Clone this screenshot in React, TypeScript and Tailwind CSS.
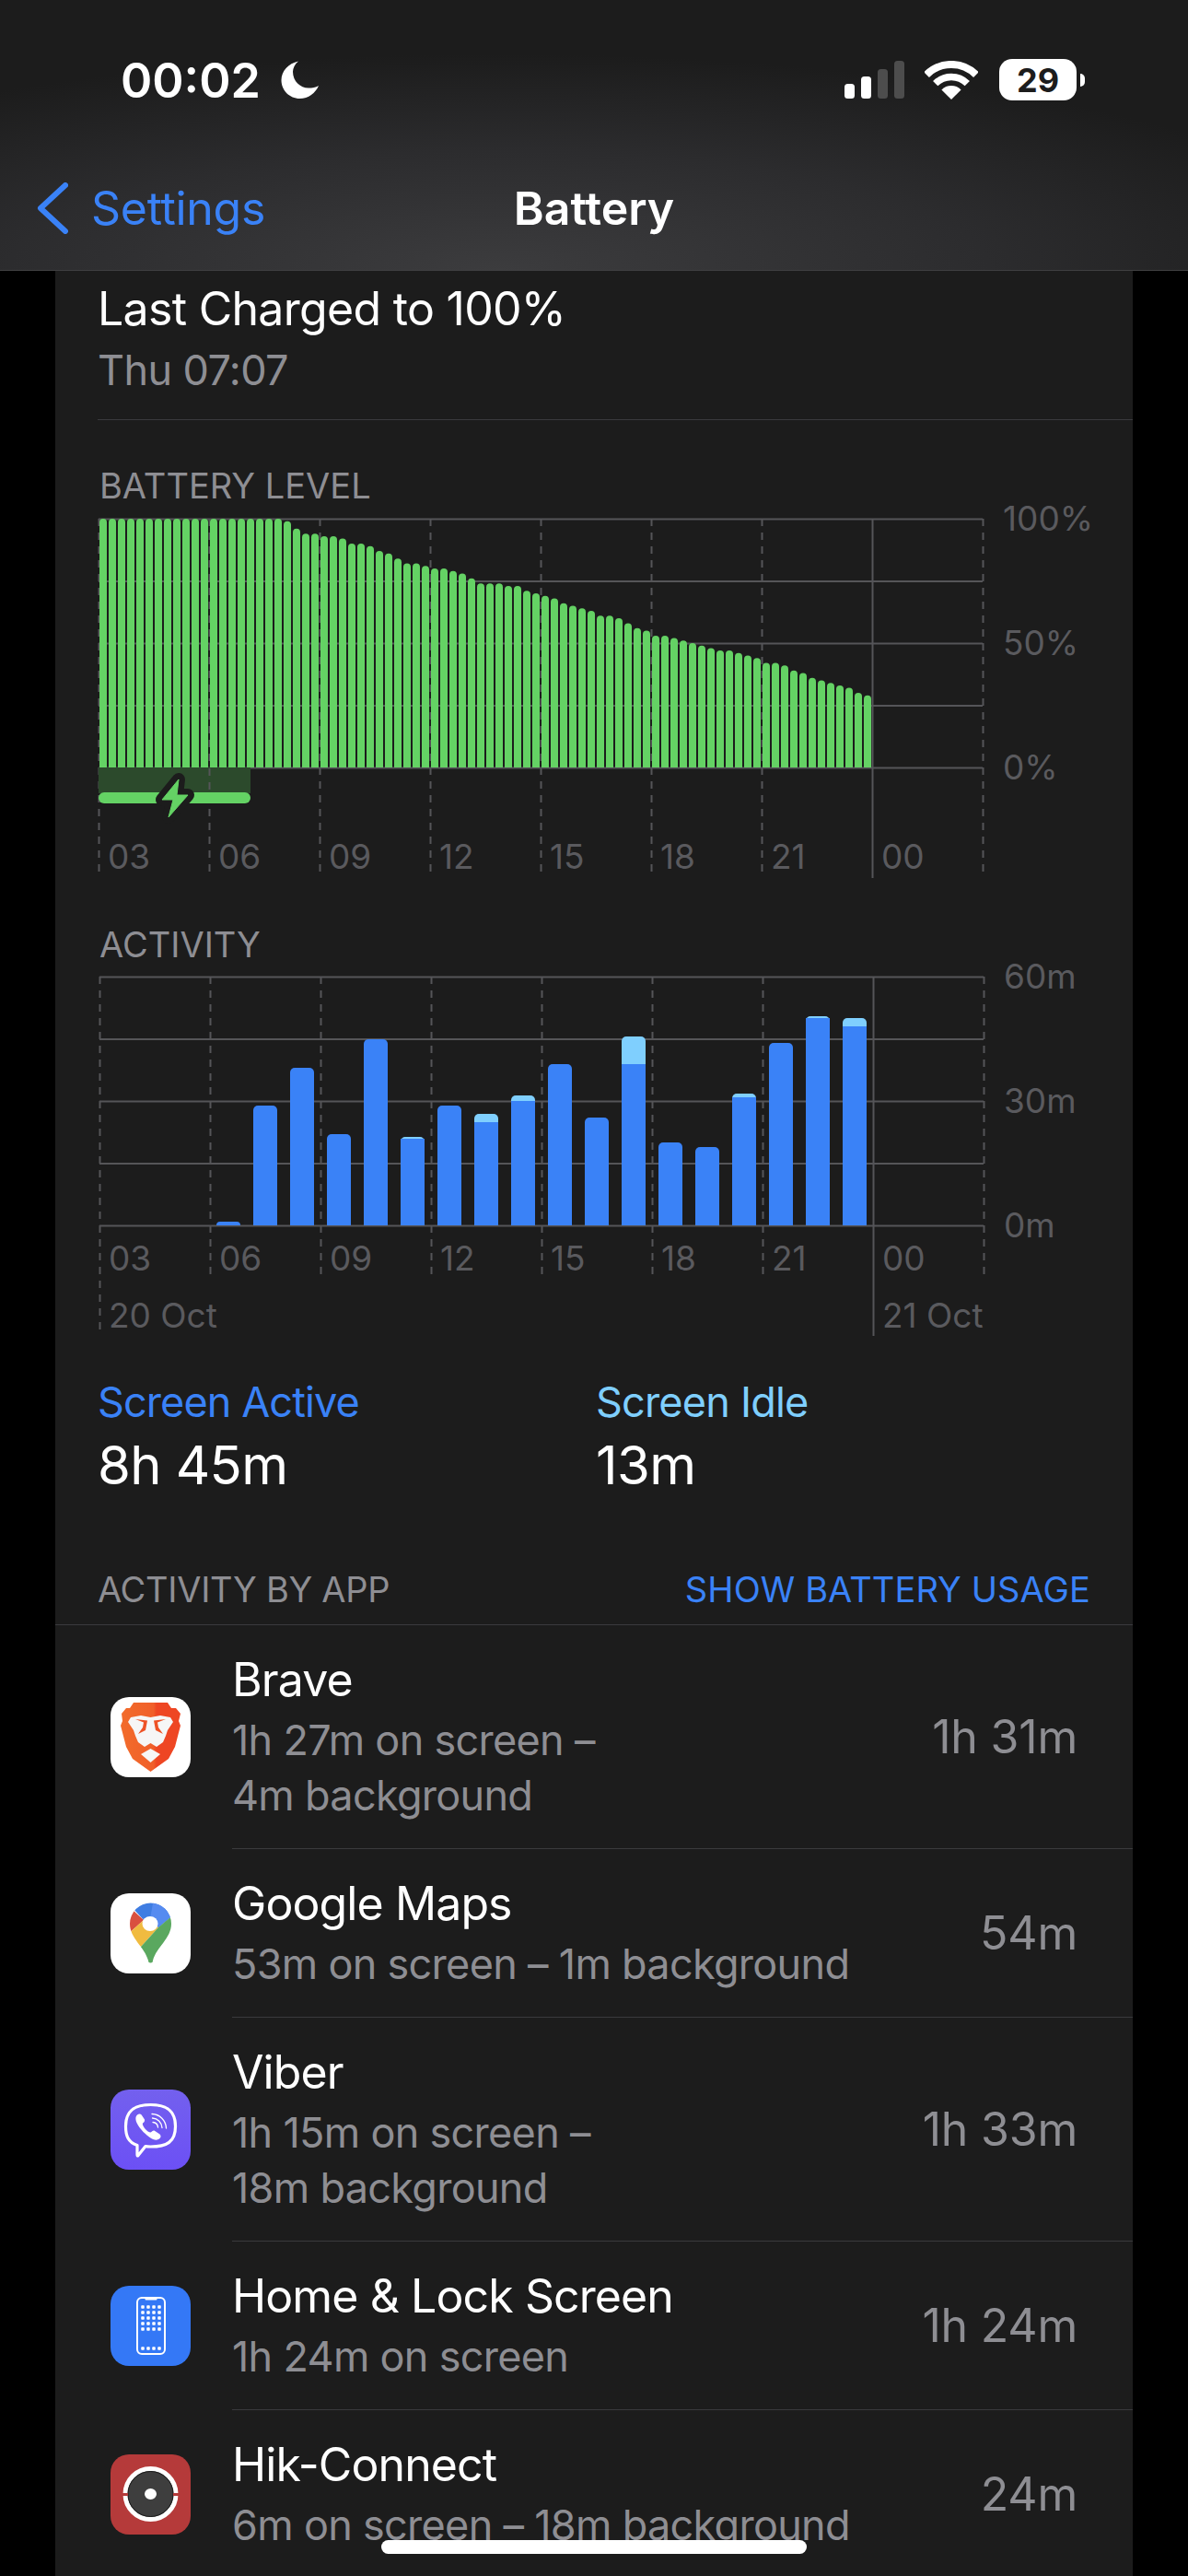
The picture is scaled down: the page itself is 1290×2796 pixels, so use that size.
import React from "react";

const levels = [
  100, 100, 100, 100, 100, 100, 100, 100, 100, 100, 100, 100, 100, 100, 100, 100, 100, 100, 100, 100,
  99, 96, 94, 94, 93, 93, 92, 90, 90, 89, 87, 86, 84, 82, 82, 81, 80, 80, 79, 78, 76,
  74, 74, 74, 73, 73, 71, 70, 69, 68, 66, 65, 64, 63, 61, 61, 60, 58, 56, 55, 53, 53, 52, 51, 50,
  49, 48, 47, 47, 46, 45, 44, 42, 42, 41, 39, 38, 36, 35, 34, 33, 32, 30, 29,
];

// slot index, screen active height, screen idle height (px)
const activity: [number, number, number][] = [
  [3, 4, 0],
  [4, 130, 0],
  [5, 171, 0],
  [6, 99, 0],
  [7, 202, 0],
  [8, 94, 2],
  [9, 130, 0],
  [10, 112, 9],
  [11, 135, 6],
  [12, 175, 0],
  [13, 117, 0],
  [14, 175, 30],
  [15, 90, 0],
  [16, 85, 0],
  [17, 139, 4],
  [18, 198, 0],
  [19, 225, 2],
  [20, 216, 9],
];

const hours = ["03", "06", "09", "12", "15", "18", "21", "00"];
const gridColor = "#555558";

function Grid({ dashEnds, solidEnd }: { dashEnds: number[]; solidEnd: number }) {
  return (
    <>
      {[0, 67.5, 135, 202.5, 270].map((y) => (
        <line key={y} x1={0} x2={960} y1={y + 0.5} y2={y + 0.5} stroke={gridColor} strokeWidth={2} />
      ))}
      {[0, 120, 240, 360, 480, 600, 720, 960].map((x, i) => (
        <line
          key={x}
          x1={x + 0.5}
          x2={x + 0.5}
          y1={0}
          y2={dashEnds[i]}
          stroke={gridColor}
          strokeWidth={2}
          strokeDasharray="8 7"
        />
      ))}
      <line x1={840.5} x2={840.5} y1={0} y2={solidEnd} stroke={gridColor} strokeWidth={2} />
    </>
  );
}

function AxisRow({ labels }: { labels: string[] }) {
  return (
    <div className="grid w-[960px] grid-cols-8">
      {labels.map((l, i) => (
        <span key={i} className="whitespace-nowrap pl-[10px] text-[37px] leading-[40px] text-[#5a5a5e]">
          {l}
        </span>
      ))}
    </div>
  );
}

function YAxis({ labels }: { labels: string[] }) {
  return (
    <div className="ml-[22px] flex h-[270px] flex-col justify-between">
      {labels.map((l) => (
        <div key={l} className="flex h-0 items-center text-[37px] text-[#5a5a5e]">
          {l}
        </div>
      ))}
    </div>
  );
}

function SectionLabel({ children }: { children: React.ReactNode }) {
  return <div className="text-[38px] leading-[46px] text-[#8e8e93]">{children}</div>;
}

function BatteryChart() {
  return (
    <div className="relative ml-[48px] mt-[13px] h-[387px]">
      <svg className="absolute left-0 top-0 overflow-visible" width={961} height={390}>
        <Grid dashEnds={[384, 384, 384, 384, 384, 384, 384, 384]} solidEnd={390} />
        <rect x={0} y={270} width={165} height={28} fill="#2c4a2c" />
        <line x1={120.5} x2={120.5} y1={271} y2={297} stroke={gridColor} strokeWidth={2} strokeDasharray="8 7" />
        <rect x={0} y={297} width={165} height={12} rx={6} fill="#64d264" />
        {levels.map((lv, i) => {
          const x = 1 + i * 10;
          const top = 270 - lv * 2.7;
          return <path key={i} d={`M${x} 270V${top + 4}a4 4 0 0 1 8 0V270Z`} fill="#64d264" />;
        })}
        <polygon
          points="87,283 69,305 81,305 76,324 97,300 85,300"
          fill="#64d264"
          stroke="#1c1c1c"
          strokeWidth={14}
          strokeLinejoin="round"
        />
        <polygon
          points="87,283 69,305 81,305 76,324 97,300 85,300"
          fill="#64d264"
          stroke="#64d264"
          strokeWidth={1}
          strokeLinejoin="round"
        />
      </svg>
      <div className="relative flex">
        <div className="h-[270px] w-[960px]" />
        <YAxis labels={["100%", "50%", "0%"]} />
      </div>
      <div className="relative mt-[77px]">
        <AxisRow labels={hours} />
      </div>
    </div>
  );
}

function ActivityChart() {
  return (
    <div className="relative ml-[48px] mt-[12px] h-[388px]">
      <svg className="absolute left-0 top-0 overflow-visible" width={961} height={390}>
        <Grid dashEnds={[384, 323, 323, 323, 323, 323, 323, 323]} solidEnd={390} />
        {activity.map(([slot, active, idle]) => {
          const x = slot * 40 + 7;
          const total = active + idle;
          const r = Math.min(5, total);
          const shape = `M${x} 270V${270 - total + r}a${r} ${r} 0 0 1 ${r} -${r}H${x + 26 - r}a${r} ${r} 0 0 1 ${r} ${r}V270Z`;
          return (
            <g key={slot}>
              <path d={shape} fill={idle > 0 ? "#7fcffe" : "#3a82f7"} />
              {idle > 0 && <rect x={x} y={270 - active} width={26} height={active} fill="#3a82f7" />}
            </g>
          );
        })}
      </svg>
      <div className="relative flex">
        <div className="h-[270px] w-[960px]" />
        <YAxis labels={["60m", "30m", "0m"]} />
      </div>
      <div className="relative mt-[16px]">
        <AxisRow labels={hours} />
      </div>
      <div className="relative mt-[22px]">
        <AxisRow labels={["20 Oct", "", "", "", "", "", "", "21 Oct"]} />
      </div>
    </div>
  );
}

function BraveIcon() {
  return (
    <svg viewBox="0 0 87 87" className="h-[87px] w-[87px]">
      <defs>
        <linearGradient id="brave" x1="0" x2="1" y1="0" y2="0">
          <stop offset="0" stopColor="#f26c2b" />
          <stop offset="0.55" stopColor="#f05f2a" />
          <stop offset="0.6" stopColor="#ee4623" />
          <stop offset="1" stopColor="#ee4623" />
        </linearGradient>
      </defs>
      <rect width="87" height="87" rx="20" fill="#fff" />
      <path
        d="M25 6H62L66 12L71 12L76 18L74 26L76 31L70 54L63 67L43.500 81L24 67L17 54L11 31L13 26L12 18L17 12L21 12Z"
        fill="url(#brave)"
      />
      <path
        d="M22 22L33 20L43.500 22L54 20L65 22L68 27L62 36L60 42L57 49L50 54L43.500 50L37 54L30 49L27 42L25 36L19 27Z"
        fill="#f6f6f6"
      />
      <path d="M43.500 56L54 62L43.500 71L33 62Z" fill="#f6f6f6" />
      <path d="M27 24L40 25.500L38 36L30 40L35 33L36 27.500ZM60 24L47 25.500L49 36L57 40L52 33L51 27.500Z" fill="#ee5226" />
    </svg>
  );
}

function MapsIcon() {
  return (
    <svg viewBox="0 0 87 87" className="h-[87px] w-[87px]">
      <defs>
        <clipPath id="pin">
          <path d="M43.500 10.500a22.500 22.500 0 0 1 22.500 22.500C66 49 50 58 46 73a2.500 2.500 0 0 1-5 0C37 58 21 49 21 33a22.500 22.500 0 0 1 22.500-22.500Z" />
        </clipPath>
      </defs>
      <rect width="87" height="87" rx="20" fill="#fff" />
      <g clipPath="url(#pin)">
        <polygon points="20,5 70,5 70,22 52,37 36,29 24,16" fill="#3f7de2" />
        <polygon points="47,5 70,5 70,22 52,37 43,28" fill="#568bf0" />
        <polygon points="10,5 36,29 15,48" fill="#d9503f" />
        <polygon points="36,29 52,37 33,58 15,48" fill="#f0bb40" />
        <polygon points="52,37 70,22 70,80 20,80 33,58" fill="#5aa85f" />
      </g>
      <ellipse cx="43" cy="33" rx="8.500" ry="8" fill="#fff" />
    </svg>
  );
}

function ViberIcon() {
  return (
    <svg viewBox="0 0 87 87" className="h-[87px] w-[87px]">
      <defs>
        <linearGradient id="viber" x1="0" x2="0" y1="0" y2="1">
          <stop offset="0" stopColor="#7360ee" />
          <stop offset="1" stopColor="#6c50f5" />
        </linearGradient>
      </defs>
      <rect width="87" height="87" rx="20" fill="url(#viber)" />
      <path
        d="M43.500 16.500C61 16.500 70.500 23 70.500 40C70.500 57 61 62 43.500 62C41 62 39.500 62 38 61.500L30 71.500Q29 72.500 29 70.500V60.500C19 57 16.500 50 16.500 40C16.500 23 26 16.500 43.500 16.500Z"
        fill="none"
        stroke="#fff"
        strokeWidth="3.200"
        strokeLinejoin="round"
      />
      <path
        d="M29 27.500C31 26 33 26.500 34 28L37 32.500C37.500 34 36.500 35.500 35 36.500C34.500 37.500 35 39 37 42C39.500 45 42 46.500 43.500 46.500C45 45.500 46 44 47.500 44.500L53.500 48.500C55 50 55 52 53 53.500C50.500 55.500 47 55 42 51.500C36 47 30.500 41 28 35C27 32 27 29 29 27.500Z"
        fill="#fff"
      />
      <path
        d="M45 26.500a16 16 0 0 1 15.500 15.500M45.500 31a11 11 0 0 1 10.500 10.500M46 35.500a6 6 0 0 1 5.500 5.500"
        fill="none"
        stroke="#fff"
        strokeWidth="1.300"
        strokeLinecap="round"
      />
    </svg>
  );
}

function HomeIcon() {
  const cols = [35, 41, 47, 53];
  return (
    <svg viewBox="0 0 87 87" className="h-[87px] w-[87px]">
      <rect width="87" height="87" rx="20" fill="#3478f6" />
      <rect x="29" y="13" width="30" height="61" rx="5" fill="none" stroke="#fff" strokeWidth="2" />
      <rect x="37.500" y="13" width="13" height="2.500" rx="1" fill="#fff" />
      {[23, 29, 35, 41, 47, 68].map((y) =>
        cols.map((x) => <rect key={`${x}-${y}`} x={x - 1.75} y={y - 1.75} width="3.500" height="3.500" rx="0.800" fill="#fff" />),
      )}
    </svg>
  );
}

function HikIcon() {
  return (
    <svg viewBox="0 0 87 87" className="h-[87px] w-[87px]">
      <rect width="87" height="87" rx="20" fill="#b53a3a" />
      <circle cx="43.500" cy="43" r="27.500" fill="#3e3e3e" stroke="#fff" strokeWidth="5" />
      <circle cx="43.500" cy="43" r="24.500" fill="none" stroke="#1c1c1c" strokeWidth="1" />
      <rect x="12" y="42" width="7" height="3" fill="#b53a3a" />
      <rect x="68" y="42" width="7" height="3" fill="#b53a3a" />
      <ellipse cx="43.500" cy="43" rx="6.500" ry="6" fill="#fff" />
    </svg>
  );
}

const apps = [
  { name: "Brave", lines: ["1h 27m on screen –", "4m background"], total: "1h 31m", icon: <BraveIcon /> },
  { name: "Google Maps", lines: ["53m on screen – 1m background"], total: "54m", icon: <MapsIcon /> },
  { name: "Viber", lines: ["1h 15m on screen –", "18m background"], total: "1h 33m", icon: <ViberIcon /> },
  { name: "Home & Lock Screen", lines: ["1h 24m on screen"], total: "1h 24m", icon: <HomeIcon /> },
  { name: "Hik-Connect", lines: ["6m on screen – 18m background"], total: "24m", icon: <HikIcon /> },
];

function AppRow({ app }: { app: (typeof apps)[number] }) {
  const tall = app.lines.length > 1;
  return (
    <div className={`flex ${tall ? "h-[243px]" : "h-[183px]"}`}>
      <div className="flex w-[192px] shrink-0 items-center pl-[60px]">{app.icon}</div>
      <div className="flex flex-1 items-center justify-between border-b border-[#3a3a3d] pr-[60px]">
        <div className="self-start pt-[29px]">
          <div className="text-[50px] leading-[60px] tracking-[-0.9px] text-white">{app.name}</div>
          <div className="mt-[6px] text-[45px] leading-[60px] tracking-[-0.7px] text-[#8e8e93]">
            {app.lines.map((l) => (
              <div key={l}>{l}</div>
            ))}
          </div>
        </div>
        <div className="text-[50px] tracking-[-0.2px] text-[#8e8e93]">{app.total}</div>
      </div>
    </div>
  );
}

function StatusBar() {
  return (
    <div className="flex h-[64px] items-start justify-between pl-[131px] pr-[112px] pt-0">
      <div className="flex h-[45px] items-center">
        <span className="mt-[2px] text-[52px] font-semibold leading-none text-white">00:02</span>
        <svg width="41" height="41" viewBox="0 0 41 41" className="ml-[22px]">
          <path
            d="M19 0.500C8 3 0.500 11 0.500 21C0.500 32 9.500 41 20.500 41C30 41 37.500 35 41 27C38 29 34 29.500 30 29.500C21 29.500 13 22 13 12C13 8 15 3.500 19 0.500Z"
            fill="#fff"
          />
        </svg>
      </div>
      <div className="flex h-[45px] items-center">
        <svg width="65" height="41" viewBox="0 0 65 41">
          <rect x="0" y="25" width="11" height="16" rx="3.500" fill="#fff" />
          <rect x="18" y="17" width="11" height="24" rx="3.500" fill="#fff" />
          <rect x="36" y="9" width="11" height="32" rx="3.500" fill="#4d4d4d" />
          <rect x="54" y="0" width="11" height="41" rx="3.500" fill="#4d4d4d" />
        </svg>
        <svg width="58" height="42" viewBox="0 0 58 42" className="ml-[22px]">
          <path d="M2.100 15.100A38 38 0 0 1 55.900 15.100" fill="none" stroke="#fff" strokeWidth="8" />
          <path d="M11.700 24.700A24.500 24.500 0 0 1 46.300 24.700" fill="none" stroke="#fff" strokeWidth="7.500" />
          <path d="M29 42L18.400 31.400A15 15 0 0 1 39.600 31.400Z" fill="#fff" />
        </svg>
        <div className="ml-[23px] flex h-[45px] w-[84px] items-center justify-center rounded-[14px] bg-white text-[36px] font-bold leading-none text-[#1c1c1c]">
          29
        </div>
        <div className="ml-[4px] h-[14px] w-[5px] rounded-r-[5px] bg-white" />
      </div>
    </div>
  );
}

export default function App() {
  return (
    <div className="relative h-[2796px] w-[1290px] overflow-hidden bg-black font-['Inter',sans-serif]">
      <header className="h-[294px] border-b border-[#3f3f41] bg-[radial-gradient(ellipse_75%_80%_at_42%_100%,#3c3c3e_0%,#2c2c2e_55%,#1c1c1c_100%)] pt-[64px]">
        <StatusBar />
        <nav className="mt-[38px] grid h-[120px] grid-cols-3 items-center">
          <div className="flex items-center pl-[40px]">
            <svg width="34" height="56" viewBox="0 0 34 56">
              <path d="M31 3L4 28L31 53" fill="none" stroke="#3a82f7" strokeWidth="6" strokeLinecap="round" strokeLinejoin="round" />
            </svg>
            <span className="ml-[25px] text-[50px] tracking-[-0.3px] text-[#3a82f7]">Settings</span>
          </div>
          <div className="text-center text-[50px] font-semibold text-white">Battery</div>
        </nav>
      </header>

      <main className="mx-[60px] flex flex-col bg-[#1c1c1c]">
        <section className="ml-[46px] border-b border-[#3a3a3d] pb-[26px] pt-[11px]">
          <div className="text-[50px] leading-[60px] tracking-[-0.7px] text-white">Last Charged to 100%</div>
          <div className="mt-[10px] text-[45px] leading-[54px] tracking-[-0.6px] text-[#8e8e93]">Thu 07:07</div>
        </section>

        <div className="ml-[48px] mt-[48px]">
          <SectionLabel>BATTERY LEVEL</SectionLabel>
        </div>
        <div className="-ml-px">
          <BatteryChart />
        </div>

        <div className="ml-[48px] mt-[52px]">
          <SectionLabel>ACTIVITY</SectionLabel>
        </div>
        <ActivityChart />

        <section className="ml-[46px] mt-[49px] flex">
          <div className="w-[541px]">
            <div className="text-[45px] leading-[50px] tracking-[-0.9px] text-[#3a82f7]">Screen Active</div>
            <div className="mt-[8px] text-[58px] leading-[70px] tracking-[-0.6px] text-white">8h 45m</div>
          </div>
          <div>
            <div className="text-[45px] leading-[50px] tracking-[-0.8px] text-[#7fcffe]">Screen Idle</div>
            <div className="mt-[8px] text-[58px] leading-[70px] tracking-[-0.6px] text-white">13m</div>
          </div>
        </section>

        <div className="mt-[77px] flex items-center justify-between border-b border-[#3a3a3d] pb-[15px] pl-[46px] pr-[46px]">
          <span className="text-[38px] leading-[46px] tracking-[-0.3px] text-[#8e8e93]">ACTIVITY BY APP</span>
          <span className="text-[38px] leading-[46px] tracking-[0.1px] text-[#3a82f7]">SHOW BATTERY USAGE</span>
        </div>

        {apps.map((a) => (
          <AppRow key={a.name} app={a} />
        ))}
      </main>

      <div className="absolute left-[414px] top-[2757px] h-[15px] w-[462px] rounded-full bg-white" />
    </div>
  );
}
